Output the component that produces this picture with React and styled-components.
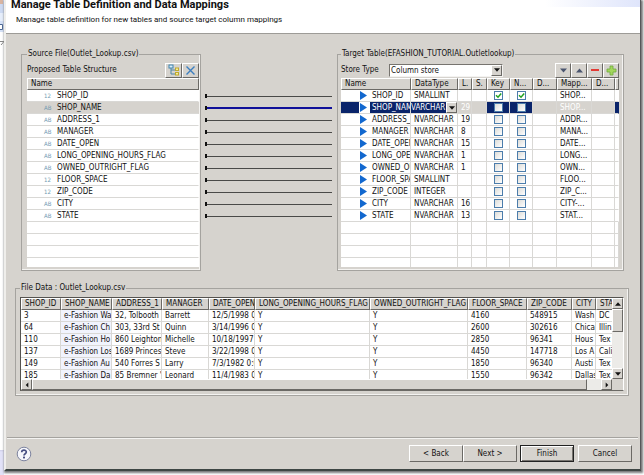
import React, { useState } from "react";
import styled, { createGlobalStyle, css } from "styled-components";

const FACE = "#d6d3ce";
const NAVY = "#0a246a";

const GlobalStyle = createGlobalStyle`
  * {
    box-sizing: border-box;
  }
  body {
    margin: 0;
    background: #ffffff;
    color: #111111;
    font-family: "DejaVu Sans Condensed", "Open Sans", sans-serif;
    font-size: 8px;
    line-height: 12px;
  }
  button, input, select {
    font: inherit;
    color: inherit;
    margin: 0;
    padding: 0;
  }
`;

const raised = css`
  border: 1px solid;
  border-color: #ffffff #6b6965 #6b6965 #ffffff;
`;

const Screen = styled.div`
  display: flex;
  min-height: 100vh;
`;

const Backdrop = styled.div`
  flex: 0 0 4px;
  background: linear-gradient(#ffffff 450px, #cfcfe8 450px, #e2e2f8 452px);
`;

const Dialog = styled.main`
  flex: 1;
  min-width: 0;
  display: flex;
  flex-direction: column;
  margin-bottom: 4px;
  margin-right: 3px;
  background: ${FACE};
  border-left: 2px solid #efeeeb;
  border-right: 1px solid #55585a;
  border-bottom: 2px solid #3e4644;
  box-shadow: 1px 1px 2px 1px #77797a;
`;

const Header = styled.header`
  height: 34px;
  padding: 0 5px;
  border-bottom: 1px solid #9d9b97;
  background: linear-gradient(90deg, #ffffff 85%, #dfe5fb) top / 100% 7px no-repeat #ffffff;
`;

const Title = styled.h1`
  margin: 0;
  font-family: Roboto, sans-serif;
  font-size: 11px;
  line-height: 10px;
  font-weight: 700;
`;

const Subtitle = styled.p`
  margin: 4px 5px 0;
  font-family: Roboto, sans-serif;
`;

const Body = styled.div`
  flex: 1;
  padding: 14px 11px 0 9px;
`;

const Mapping = styled.div`
  display: grid;
  grid-template-columns: 180fr 136fr 287fr;
  padding: 0 5px 0 6px;
`;

const Group = styled.fieldset`
  min-width: 0;
  margin: 0;
  padding: ${(props) => props.$pad};
  border: 1px solid #a5a39f;
  box-shadow: inset -1px -1px 0 #f4f3f1;
`;

const Legend = styled.legend`
  padding: 0 1px;
`;

const Toolbar = styled.div`
  display: flex;
  align-items: center;
  height: 16px;
`;

const Label = styled.label`
  flex: 0 0 48px;
`;

const Caption = styled.span`
  flex: 1;
`;

const Spacer = styled.span`
  flex: 1;
`;

const ToolButton = styled.button`
  ${raised}
  display: flex;
  align-items: center;
  justify-content: center;
  width: ${(props) => props.$width || 17}px;
  height: 15px;
  background: ${FACE};
`;

const SelectBox = styled.span`
  display: flex;
  flex: 0 0 ${(props) => props.$width}px;
  height: 13px;
  border: 1px solid;
  border-color: #77746f #f4f3f1 #f4f3f1 #77746f;
  background: #ffffff;
`;

const Select = styled.select`
  flex: 1;
  min-width: 0;
  padding-left: 1px;
  border: 0;
  appearance: none;
  background: #ffffff;
  line-height: 11px;
  outline: none;
`;

const Drop = styled.button`
  ${raised}
  display: flex;
  align-items: center;
  justify-content: center;
  width: 11px;
  background: ${FACE};
`;

const Viewport = styled.div`
  height: 189px;
  overflow: hidden;
  background: #ffffff;
`;

const Table = styled.table`
  width: 100%;
  table-layout: fixed;
  border-collapse: separate;
  border-spacing: 0;
`;

const Th = styled.th`
  ${raised}
  height: 12px;
  padding: 0 0 0 3px;
  overflow: hidden;
  background: ${FACE};
  line-height: 10px;
  font-weight: 400;
  text-align: left;
  white-space: nowrap;
`;

const cellTone = {
  navy: css`
    background: ${NAVY};
    color: #ffffff;
  `,
  gray: css`
    background: ${FACE};
    color: #ffffff;
  `,
  row: css`
    background: ${FACE};
  `,
  tint: css`
    background: #f1f3fd;
  `,
};

const Td = styled.td`
  height: 12px;
  padding: 0 0 0 ${(props) => props.$pad ?? 3}px;
  overflow: hidden;
  border-bottom: 1px solid #d9d8d5;
  border-right: 1px solid ${(props) => (props.$plain ? "transparent" : "#d9d8d5")};
  line-height: 11px;
  white-space: nowrap;
  ${(props) => cellTone[props.$tone]}
`;

const TypeMark = styled.span`
  display: inline-block;
  width: 13px;
  color: #6f9ab2;
  font-size: 6px;
`;

const NameCell = styled.span`
  display: flex;
  gap: 2px;
  height: 11px;
  line-height: 11px;
`;

const Pointer = styled.span`
  flex: 0 0 11px;
  background: #ffffff;
  line-height: 0;
`;

const TypeEditor = styled.span`
  display: flex;
  height: 11px;
  background: ${FACE};
`;

const TypeSelect = styled(Select)`
  background: ${NAVY};
  color: #ffffff;
  padding: 0;
`;

const Check = styled.input`
  display: block;
  width: 9px;
  height: 9px;
  margin: 0 auto;
  appearance: none;
  border: 1px solid #4c7dab;
  background: linear-gradient(135deg, #dcdcd8, #ffffff);

  &:checked {
    background: #ffffff
      url("data:image/svg+xml,%3Csvg xmlns='http://www.w3.org/2000/svg' viewBox='0 0 7 7'%3E%3Cpath d='M1 3.2 3 5.2 6.2 1.4' fill='none' stroke='%2321a121' stroke-width='1.5'/%3E%3C/svg%3E");
  }
`;

const Wires = styled.div`
  padding: 42px 5px 0 4px;
`;

const Wire = styled.div`
  display: flex;
  align-items: center;
  height: 12px;

  &::before {
    content: "";
    width: 2px;
    height: 4px;
    background: #111111;
  }
  &::after {
    content: "";
    flex: 1;
    height: ${(props) => (props.$active ? 2 : 1)}px;
    background: ${(props) => (props.$active ? "#10109a" : "#4a4a48")};
  }
`;

const FileGroup = styled(Group)`
  margin-top: 11px;
`;

const FileFrame = styled.div`
  display: grid;
  grid-template-columns: minmax(0, 1fr) 11px;
  grid-template-rows: 81px 11px;
  border: 1px solid;
  border-color: #55534f #ffffff #6b6965 #55534f;
  background: ${FACE};
`;

const FileView = styled.div`
  overflow: hidden;
  background: #ffffff;
`;

const Scroll = styled.div`
  display: flex;
  flex-direction: ${(props) => (props.$vertical ? "column" : "row")};
  background: #ecebe8;
`;

const ScrollButton = styled.button`
  ${raised}
  flex: 0 0 11px;
  display: flex;
  align-items: center;
  justify-content: center;
  background: ${FACE};
`;

const Thumb = styled.div`
  ${raised}
  flex: ${(props) => props.$size};
  background: ${FACE};
`;

const Gap = styled.div`
  flex: ${(props) => props.$size};
`;

const Footer = styled.footer`
  display: flex;
  align-items: center;
  height: 32px;
  margin: 0 2px 0 1px;
  padding: 0 6px 0 9px;
  border-top: 1px solid #a5a39f;
  box-shadow: inset 0 1px 0 #f4f3f1;
`;

const HelpButton = styled.button`
  width: 16px;
  height: 16px;
  border: 0;
  background: none;
  line-height: 0;
`;

const Actions = styled.div`
  display: flex;
  flex: 1;
  justify-content: flex-end;
`;

const Action = styled.button`
  ${raised}
  width: 54px;
  height: 17px;
  margin-left: ${(props) => props.$gap || 0}px;
  background: ${FACE};
  ${(props) =>
    props.$default &&
    css`
      border-color: #222222;
      box-shadow: inset 1px 1px 0 #ffffff, inset -1px -1px 0 #77746f;
    `}
`;

// name, datatype, length, mapping
const columns = [
  ["SHOP_ID", "SMALLINT", "", "SHOP..."],
  ["SHOP_NAME", "VARCHAR", "29", "SHOP..."],
  ["ADDRESS_1", "NVARCHAR", "19", "ADDR..."],
  ["MANAGER", "NVARCHAR", "8", "MANA..."],
  ["DATE_OPEN", "NVARCHAR", "15", "DATE..."],
  ["LONG_OPENING_HOURS_FLAG", "NVARCHAR", "1", "LONG..."],
  ["OWNED_OUTRIGHT_FLAG", "NVARCHAR", "1", "OWN..."],
  ["FLOOR_SPACE", "SMALLINT", "", "FLOO..."],
  ["ZIP_CODE", "INTEGER", "", "ZIP_C..."],
  ["CITY", "NVARCHAR", "16", "CITY-..."],
  ["STATE", "NVARCHAR", "13", "STAT..."],
];

const blanks = [0, 1, 2, 3];

const targetHeads = ["Name", "DataType", "L.", "S.", "Key", "N...", "D...", "Mapp...", "D...", ""];
const targetWidths = [70, 47, 14, 15, 23, 23, 24, 35, 23, 4];
const NAME_CHARS = 9;

const fileHeads = [
  "SHOP_ID", "SHOP_NAME", "ADDRESS_1", "MANAGER", "DATE_OPEN", "LONG_OPENING_HOURS_FLAG",
  "OWNED_OUTRIGHT_FLAG", "FLOOR_SPACE", "ZIP_CODE", "CITY", "STA",
];
const fileWidths = [40, 51, 50, 47, 46, 115, 98, 59, 45, 24, 17];
const fileRows = [
  ["3", "e-Fashion Wa", "32, Tolbooth", "Barrett", "12/5/1998 0", "Y", "Y", "4160", "548915", "Wash", "DC"],
  ["64", "e-Fashion Ch", "303, 33rd St", "Quinn", "3/14/1996 0", "Y", "Y", "2600", "302616", "Chica", "Illin"],
  ["110", "e-Fashion Ho", "860 Leighton", "Michelle", "10/18/1997 0", "Y", "Y", "2850", "96341", "Hous", "Tex"],
  ["137", "e-Fashion Los", "1689 Princes", "Steve", "3/22/1998 0", "Y", "Y", "4450", "147718", "Los A", "Cali"],
  ["149", "e-Fashion Au", "540 Forres S", "Larry", "7/3/1982 0:0", "Y", "Y", "1850", "96340", "Austi", "Tex"],
  ["185", "e-Fashion Da", "85 Bremner '", "Leonard", "11/4/1983 0", "Y", "Y", "1550", "96342", "Dallas", "Tex"],
];

const Cols = ({ widths }) => (
  <colgroup>
    {widths.map((w, i) => (
      <col key={i} width={w} />
    ))}
  </colgroup>
);

const arrows = {
  down: "M0 1h7L3.5 5z",
  up: "M0 5h7L3.5 1z",
  left: "M5 0v6L2 3z",
  right: "M2 0v6l3-3z",
};

const Arrow = ({ dir, color = "#111111", size = 6 }) => (
  <svg width={size} height={size} viewBox="0 0 7 6">
    <path d={arrows[dir]} fill={color} />
  </svg>
);

const TreeIcon = () => (
  <svg width="12" height="12" viewBox="0 0 12 12" fill="none">
    <path d="M3 4v6h5M3 6h5" stroke="#4f86a6" />
    <rect x="1" y="1" width="4" height="3" fill="#d9edf8" stroke="#3e83ad" />
    <rect x="7.5" y="4" width="3" height="2.5" fill="#f8ee9a" stroke="#c0a92c" />
    <rect x="7.5" y="8.5" width="3" height="2.5" fill="#f8ee9a" stroke="#c0a92c" />
  </svg>
);

const CrossIcon = () => (
  <svg width="11" height="11" viewBox="0 0 11 11">
    <path d="M1.5 1.5l8 8M9.5 1.5l-8 8" stroke="#3d7fc0" strokeWidth="1.4" />
  </svg>
);

const MinusIcon = () => (
  <svg width="10" height="10" viewBox="0 0 10 10">
    <rect x="1" y="4" width="8" height="2" fill="#e23a34" />
  </svg>
);

const PlusIcon = () => (
  <svg width="11" height="11" viewBox="0 0 11 11">
    <path d="M4 1h3v3h3v3H7v3H4V7H1V4h3z" fill="#a2d65c" stroke="#6fab3c" strokeWidth="0.8" />
  </svg>
);

const HelpIcon = () => (
  <svg width="16" height="16" viewBox="0 0 16 16" fill="none">
    <circle cx="8" cy="8" r="6.8" fill="#f5f6fb" stroke="#7d839f" />
    <path d="M5.7 6.3C5.7 3.4 10.3 3.5 10.3 6.1 10.3 7.8 8 7.7 8 9.6" stroke="#474f82" strokeWidth="1.7" />
    <rect x="7" y="10.6" width="2" height="1.8" fill="#474f82" />
  </svg>
);

const PointerIcon = () => (
  <svg width="9" height="11" viewBox="0 0 9 11">
    <path d="M1 1v9l7-4.5z" fill="#1268cf" />
  </svg>
);

const BackdropArt = () => (
  <svg width="4" height="46" viewBox="0 0 4 46">
    <rect width="4" height="13" fill="#cddaf3" />
    <rect width="3" height="4" fill="#d9b5a2" />
    <rect y="13" width="4" height="8" fill="#e6eefb" />
    <rect y="21" width="4" height="11" fill="#d4e0f6" />
    <path d="M0 24.5h2.5v5H0" fill="#ffffff" stroke="#4c6894" />
    <path d="M0 41.5h4L1 45" fill="none" stroke="#888888" />
  </svg>
);

const SourceTable = ({ selected }) => (
  <Viewport>
    <Table>
      <thead>
        <tr>
          <Th>Name</Th>
        </tr>
      </thead>
      <tbody>
        {columns.map(([name, type], i) => (
          <tr key={name}>
            <Td $pad={17} $plain $tone={i === selected ? "row" : undefined}>
              <TypeMark>{type.includes("CHAR") ? "AB" : "12"}</TypeMark>
              {name}
            </Td>
          </tr>
        ))}
        {blanks.map((n) => (
          <tr key={n}>
            <Td $plain />
          </tr>
        ))}
      </tbody>
    </Table>
  </Viewport>
);

const TargetRow = ({ row, index, selected }) => {
  const [name, type, length, mapping] = row;
  const active = index === selected;
  const gray = active ? "gray" : undefined;
  const navy = active ? "navy" : undefined;

  return (
    <tr>
      <Td $pad={18} $tone={navy}>
        <NameCell>
          <Pointer>
            <PointerIcon />
          </Pointer>
          {name.slice(0, NAME_CHARS)}
        </NameCell>
      </Td>
      <Td $pad={active ? 0 : 3}>
        {active ? (
          <TypeEditor>
            <TypeSelect aria-label="Data type" defaultValue={type}>
              <option>{type}</option>
            </TypeSelect>
            <Drop aria-label="Open data types">
              <Arrow dir="down" />
            </Drop>
          </TypeEditor>
        ) : (
          type
        )}
      </Td>
      <Td $tone={gray}>{length}</Td>
      <Td $tone={gray} />
      <Td $pad={0} $tone={navy}>
        <Check type="checkbox" aria-label={`${name} key`} defaultChecked={index === 0} />
      </Td>
      <Td $pad={0} $tone={navy}>
        <Check type="checkbox" aria-label={`${name} not null`} defaultChecked={index === 0} />
      </Td>
      <Td $tone={gray} />
      <Td $tone={gray}>{mapping}</Td>
      <Td $tone={gray} />
      <Td $pad={0} $plain $tone={navy} />
    </tr>
  );
};

const TargetTable = ({ selected }) => (
  <Viewport>
    <Table>
      <Cols widths={targetWidths} />
      <thead>
        <tr>
          {targetHeads.map((head, i) => (
            <Th key={i}>{head}</Th>
          ))}
        </tr>
      </thead>
      <tbody>
        {columns.map((row, i) => (
          <TargetRow key={row[0]} row={row} index={i} selected={selected} />
        ))}
        {blanks.map((n) => (
          <tr key={n}>
            {targetHeads.map((head, i) => (
              <Td key={i} $pad={0} />
            ))}
          </tr>
        ))}
      </tbody>
    </Table>
  </Viewport>
);

const FileData = () => (
  <FileFrame>
    <FileView>
      <Table>
        <Cols widths={fileWidths} />
        <thead>
          <tr>
            {fileHeads.map((head) => (
              <Th key={head}>{head}</Th>
            ))}
          </tr>
        </thead>
        <tbody>
          {fileRows.map((row) => (
            <tr key={row[0]}>
              {row.map((value, i) => (
                <Td key={i} $tone={i === 1 ? "tint" : undefined}>
                  {value}
                </Td>
              ))}
            </tr>
          ))}
        </tbody>
      </Table>
    </FileView>
    <Scroll $vertical>
      <ScrollButton aria-label="Scroll up">
        <Arrow dir="up" />
      </ScrollButton>
      <Thumb $size={22} />
      <Gap $size={37} />
      <ScrollButton aria-label="Scroll down">
        <Arrow dir="down" />
      </ScrollButton>
    </Scroll>
    <Scroll>
      <ScrollButton aria-label="Scroll left">
        <Arrow dir="left" />
      </ScrollButton>
      <Thumb $size={555} />
      <Gap $size={14} />
      <ScrollButton aria-label="Scroll right">
        <Arrow dir="right" />
      </ScrollButton>
    </Scroll>
  </FileFrame>
);

const App = () => {
  const [selected] = useState(1);
  const [storeType, setStoreType] = useState("Column store");

  return (
    <Screen>
      <GlobalStyle />
      <Backdrop>
        <BackdropArt />
      </Backdrop>
      <Dialog>
        <Header>
          <Title>Manage Table Definition and Data Mappings</Title>
          <Subtitle>Manage table definition for new tables and source target column mappings</Subtitle>
        </Header>
        <Body>
          <Mapping>
            <Group $pad="2px 1px 3px 5px">
              <Legend>Source File(Outlet_Lookup.csv)</Legend>
              <Toolbar>
                <Caption>Proposed Table Structure</Caption>
                <ToolButton aria-label="Show tree">
                  <TreeIcon />
                </ToolButton>
                <ToolButton aria-label="Remove">
                  <CrossIcon />
                </ToolButton>
              </Toolbar>
              <SourceTable selected={selected} />
            </Group>
            <Wires>
              {columns.map(([name], i) => (
                <Wire key={name} $active={i === selected} />
              ))}
            </Wires>
            <Group $pad="2px 4px 3px 3px">
              <Legend>Target Table(EFASHION_TUTORIAL.Outletlookup)</Legend>
              <Toolbar>
                <Label htmlFor="store-type">Store Type</Label>
                <SelectBox $width={114}>
                  <Select
                    id="store-type"
                    value={storeType}
                    onChange={(e) => setStoreType(e.target.value)}
                  >
                    <option>Column store</option>
                    <option>Row store</option>
                  </Select>
                  <Drop aria-label="Open store types">
                    <Arrow dir="down" />
                  </Drop>
                </SelectBox>
                <Spacer />
                <ToolButton $width={16} aria-label="Move down">
                  <Arrow dir="down" color="#4a556e" size={7} />
                </ToolButton>
                <ToolButton $width={16} aria-label="Move up">
                  <Arrow dir="up" color="#4a556e" size={7} />
                </ToolButton>
                <ToolButton $width={16} aria-label="Remove column">
                  <MinusIcon />
                </ToolButton>
                <ToolButton $width={16} aria-label="Add column">
                  <PlusIcon />
                </ToolButton>
              </Toolbar>
              <TargetTable selected={selected} />
            </Group>
          </Mapping>
          <FileGroup $pad="3px 4px 4px">
            <Legend>File Data : Outlet_Lookup.csv</Legend>
            <FileData />
          </FileGroup>
        </Body>
        <Footer>
          <HelpButton aria-label="Help">
            <HelpIcon />
          </HelpButton>
          <Actions>
            <Action>&lt; Back</Action>
            <Action>Next &gt;</Action>
            <Action $default $gap={3}>
              Finish
            </Action>
            <Action $gap={4}>Cancel</Action>
          </Actions>
        </Footer>
      </Dialog>
    </Screen>
  );
};

export default App;
